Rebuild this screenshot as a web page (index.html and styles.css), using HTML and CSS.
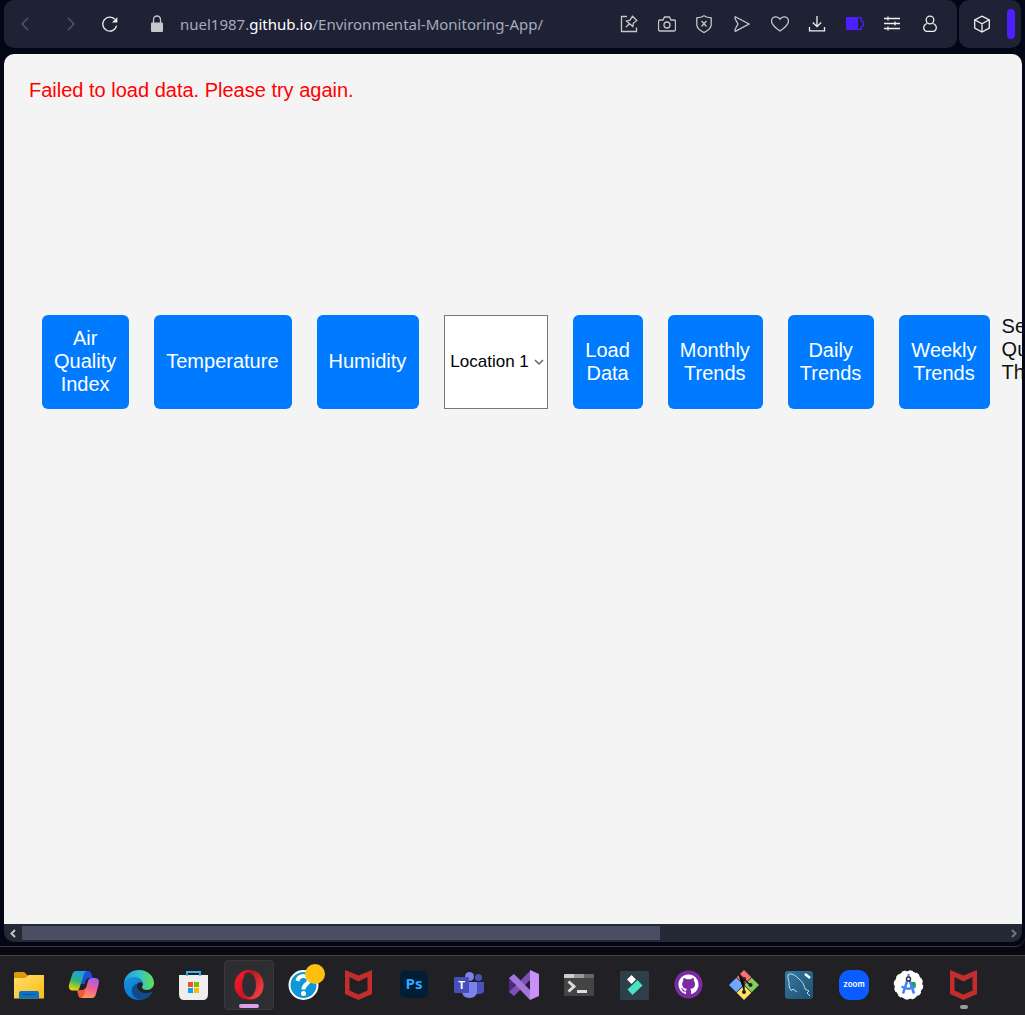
FILE: index.html
```html
<!DOCTYPE html>
<html lang="en">
<head>
<meta charset="utf-8">
<meta name="viewport" content="width=device-width, initial-scale=1">
<title>Environmental Monitoring App</title>
<link rel="stylesheet" href="styles.css">
</head>
<body>
<div class="window">
  <header class="chrome">
    <div class="address-bar">
      <div class="history">
        <button class="tool dim" aria-label="Back"><svg viewBox="0 0 18 18"><path d="M12 3 6 9l6 6"/></svg></button>
        <button class="tool dim" aria-label="Forward"><svg viewBox="0 0 18 18"><path d="m6 3 6 6-6 6"/></svg></button>
      </div>
      <button class="tool bright" aria-label="Reload"><svg viewBox="0 0 18 18"><path d="M15.600 10.600A7 7 0 1 1 13.800 4.200"/><path class="solid" d="M16.400 2v5.400H11z"/></svg></button>
      <div class="location">
        <button class="tool" aria-label="Site information"><svg viewBox="0 0 18 18"><path d="M5.500 8V4.500a3.500 3.500 0 0 1 7 0V8"/><rect class="solid" x="3" y="7.500" width="12" height="9.500" rx="1"/></svg></button>
        <a class="url" href="#">nuel1987.<b>github.io</b>/Environmental-Monitoring-App/</a>
      </div>
      <div class="tools">
        <button class="tool" aria-label="Edit page"><svg viewBox="0 0 18 18"><path d="M7 1.500H1.500v15h15v-4"/><path d="m12.500 1.200 4.300 4.300-3.300 2.500-.7 3.500L6.500 6l3.500-.8zM9.500 8.700 5.800 12.200"/></svg></button>
        <button class="tool" aria-label="Snapshot"><svg viewBox="0 0 18 18"><path d="M2 5h3l1.500-3h5L13 5h3q1.500 0 1.500 1.500v8q0 1.500-1.500 1.500H2q-1.500 0-1.500-1.500v-8Q.5 5 2 5z"/><circle cx="9" cy="10" r="3"/></svg></button>
        <button class="tool" aria-label="Tracker blocker"><svg viewBox="0 0 18 18"><path d="M9 .8q3 2 7.200 2v6.700q0 4.500-7.200 8-7.200-3.500-7.200-8V2.800Q6 2.800 9 .8z"/><path d="m6.500 6 5 5.500m0-5.500-5 5.500"/></svg></button>
        <button class="tool" aria-label="Send"><svg viewBox="0 0 18 18"><path d="M2.300 1.700 16 9 2.300 16.300Q1.500 15 2.500 13.500L5 9 2.500 4.500Q1.500 3 2.300 1.700z"/></svg></button>
        <button class="tool" aria-label="Add to favourites"><svg viewBox="0 0 18 18"><path d="M9 16C6 14 .5 10.500.5 6.100.5 1.500 6.500.2 9 4.200c2.500-4 8.500-2.700 8.500 1.900C17.500 10.500 12 14 9 16z"/></svg></button>
        <button class="tool bright" aria-label="Downloads"><svg viewBox="0 0 18 18"><path d="M9 1v10.500M4.800 7.500 9 11.700l4.200-4.200M1.500 12v3.800h15V12"/></svg></button>
        <button class="tool violet" aria-label="Battery saver"><svg viewBox="0 0 18 18"><rect class="solid" x="0" y="2" width="12" height="13" rx="1"/><path d="M12 2.700h3v2.600l2.200 1.500v4L15 12.200v2.100h-3"/></svg></button>
        <button class="tool bright" aria-label="Easy setup"><svg viewBox="0 0 18 18"><path d="M1 3.500h16M1 8.500h16M1 13.500h16M5 1.500v4M12 6.500v4M5 11.500v4"/></svg></button>
        <button class="tool bright" aria-label="Profile"><svg viewBox="0 0 18 18"><circle cx="9" cy="5" r="3.800"/><path d="M5.800 8.500c-3 1.500-3.500 4-2.700 6q.7 1.800 2.700 1.800h6.400q2 0 2.700-1.800c.8-2 .3-4.500-2.700-6"/></svg></button>
      </div>
    </div>
    <div class="side-bar">
      <button class="tool bright" aria-label="Extensions"><svg viewBox="0 0 18 18"><path d="m9 1.200 7.300 3.600v8.400L9 17l-7.300-3.800V4.800zM1.700 4.800 9 8.700l7.300-3.900M9 8.700V17"/></svg></button>
      <span class="accent"></span>
    </div>
  </header>

  <main class="page">
    <p class="error" role="alert">Failed to load data. Please try again.</p>
    <div class="controls">
      <button class="action">Air Quality Index</button>
      <button class="action">Temperature</button>
      <button class="action">Humidity</button>
      <div class="picker">
        <select aria-label="Location"><option>Location 1</option><option>Location 2</option></select>
        <svg class="caret" viewBox="0 0 10 10" aria-hidden="true"><path d="m1 3 4 4 4-4"/></svg>
      </div>
      <button class="action">Load Data</button>
      <button class="action">Monthly Trends</button>
      <button class="action">Daily Trends</button>
      <button class="action">Weekly Trends</button>
      <span class="threshold">Set Air<br>Quality<br>Threshold</span>
    </div>
  </main>

  <div class="scroll">
    <svg class="arrow" viewBox="0 0 18 18"><path d="M11 6 7.500 9.500 11 13"/></svg>
    <div class="track"><div class="thumb"></div></div>
    <svg class="arrow off" viewBox="0 0 18 18"><path d="m8 6 3.500 3.500L8 13"/></svg>
  </div>
</div>

<nav class="taskbar" aria-label="Taskbar">
  <button class="app" aria-label="File Explorer"><svg viewBox="0 0 32 32">
    <defs><linearGradient id="folder" x2="1" y2="1"><stop stop-color="#ffdf6e"/><stop offset="1" stop-color="#fbbb13"/></linearGradient></defs>
    <path fill="#dc9a06" d="M1 4.500Q1 3 2.500 3H10q1.500 0 2.500 1.200L15 7v3H1z"/><path fill="url(#folder)" d="M1 9h10q1.500 0 2.500-1.300Q14.500 6 16 6h15v23.500H1z"/><path fill="#0a74c4" d="M6 29.500V24q0-2 2-2h16q2 0 2 2v5.500z"/><path stroke="#07518e" d="M9.500 25.500h13"/></svg></button>
  <button class="app" aria-label="Copilot"><svg viewBox="0 0 32 32">
    <defs><linearGradient id="cop1" x1=".6" y1="0" x2=".3" y2="1"><stop stop-color="#1c9cf0"/><stop offset=".5" stop-color="#2db27a"/><stop offset="1" stop-color="#f2d600"/></linearGradient><linearGradient id="cop2" x1=".6" y1="0" x2=".3" y2="1"><stop stop-color="#a35bf2"/><stop offset=".5" stop-color="#f3608f"/><stop offset="1" stop-color="#ff9a5a"/></linearGradient></defs>
    <path fill="#1b50d8" d="M7 2h13q2.500 0 3.500 3l1 4h-3q-3 0-4 3l-1 3h-5z"/><path fill="#f2583c" d="M9 21h6l4-3v9q-.7 2-3 2h-3q-2 0-2.600-2z"/><path fill="url(#cop1)" d="M8 2h11q-2 0-3 3l-4.500 14q-.8 2.500-3 2.500H5q-5 0-4-6L4 6q1-4 4-4z"/><path fill="url(#cop2)" d="M24 29H13q2 0 3-3l4-14q1-3 4-3h3q5 0 3.700 6L28 25q-1 4-4 4z"/></svg></button>
  <button class="app" aria-label="Edge"><svg viewBox="0 0 32 32">
    <defs><linearGradient id="edge1" x2="1"><stop stop-color="#1c9de2"/><stop offset=".5" stop-color="#35c1c9"/><stop offset="1" stop-color="#5ee04e"/></linearGradient><linearGradient id="edge2" y2="1"><stop stop-color="#1693df"/><stop offset="1" stop-color="#0869c5"/></linearGradient></defs>
    <path fill="url(#edge1)" d="M1 15C1 7 7.500 1 16 1s15 6 15 13c0 4-3 7-7 7-3 0-5-1-5-3 0-1 1-1.500 1-3 0-2-2-4-5-4z"/><path fill="url(#edge2)" d="M1 16c0-5 5-8 10-8 5 0 9 3 9 7-2-3-6-2-6 2 0 6 5 9 9 9 2 0 4-1 5.500-2C26 28 21 31 16 31 8 31 1 25 1 16z"/><path fill="#114a8b" d="M14 14.500c-5 2-6.500 7-4 11 2 4 6 5.500 8 5.300 5-.5 9-3.500 11-7 .4-1-.4-1.200-1-.8-7 3-14-1-14-6z"/></svg></button>
  <button class="app" aria-label="Microsoft Store"><svg viewBox="0 0 32 32">
    <path fill="#eee" d="M1 6h29v19q0 6-5 6H6q-5 0-5-6z"/><path fill="none" stroke="#35b8ef" stroke-width="1.800" d="M9 7V3h13v4"/><path fill="#f25022" d="M10 13h5v5h-5z"/><path fill="#7fba00" d="M16 13h5v5h-5z"/><path fill="#00a4ef" d="M10 19h5v5h-5z"/><path fill="#ffb900" d="M16 19h5v5h-5z"/></svg></button>
  <button class="app active" aria-label="Opera"><svg viewBox="0 0 32 32">
    <defs><linearGradient id="op1" y2="1"><stop stop-color="#ff1b2d"/><stop offset="1" stop-color="#b00a18"/></linearGradient><linearGradient id="op2" y2="1"><stop stop-color="#9c0c14"/><stop offset="1" stop-color="#ff4b4b"/></linearGradient></defs>
    <ellipse cx="16" cy="16" rx="14.500" ry="15" fill="url(#op1)"/><path fill="url(#op2)" d="M11 5q4-4 10-3c6 2 9.500 7 9.500 14S27 28 21 30q-6 1-10-3z"/><ellipse cx="16" cy="16" rx="7" ry="12" fill="#2e2d32"/></svg></button>
  <button class="app" aria-label="Get Help"><svg viewBox="0 0 32 32">
    <circle cx="15.500" cy="16" r="14" fill="#0d97d8" stroke="#fff" stroke-width="2"/><path fill="none" stroke="#fff" stroke-width="4" d="M9.500 12q1-5 6-5t5.300 4.500c0 4-5.300 3.500-5.300 9"/><circle cx="15.500" cy="24.500" r="2.500" fill="#fff"/></svg><span class="badge"></span></button>
  <button class="app" aria-label="McAfee"><svg viewBox="0 0 32 32"><path fill="#c32d2d" fill-rule="evenodd" d="M2 1l13.500 5.500L29 1v24l-13.500 6L2 25zM6.500 8v13.500l9 4 9-4V8l-9 4.500z"/></svg></button>
  <button class="app" aria-label="Photoshop"><svg viewBox="0 0 32 32"><rect x="2" y="2" width="28" height="27" rx="5" fill="#001e36"/><text class="glyph ps" x="16" y="20">Ps</text></svg></button>
  <button class="app" aria-label="Teams"><svg viewBox="0 0 32 32">
    <circle cx="25.500" cy="8.500" r="3.500" fill="#4a53bd"/><path fill="#4a53bd" d="M22 13h9v8q0 4-5 4h-4z"/><circle cx="16.500" cy="7.500" r="4.500" fill="#7b83eb"/><path fill="#7b83eb" d="M9 13h15v9q0 7-7.500 7T9 22z"/><rect x="1" y="8" width="15" height="16" rx="1" fill="#464eb8"/><text class="glyph teams" x="8.500" y="20">T</text></svg></button>
  <button class="app" aria-label="Visual Studio"><svg viewBox="0 0 32 32">
    <path fill="#52297d" d="M1 9l5-4v22l-5-4z"/><path fill="#7b4fb5" d="M22 2v9L6 27l-5-4z"/><path fill="#a574dc" d="M1 9l5-4 16 16v10z"/><path fill="#cb90f8" d="M22 1l9 4v22l-9 4z"/></svg></button>
  <button class="app" aria-label="Terminal"><svg viewBox="0 0 32 32">
    <rect x="1" y="5" width="30" height="22" rx="1" fill="#444"/><path fill="#ccc" d="M1 9V6q0-1 1-1h9v4z"/><path fill="#999" d="M11 5h10v4H11z"/><path fill="#666" d="M21 5h9q1 0 1 1v3H21z"/><path fill="none" stroke="#ddd" stroke-width="3" d="m5.500 12.500 5.500 5-5.500 5"/><path fill="#ddd" d="M14 21h10v3H14z"/></svg></button>
  <button class="app" aria-label="Filmora"><svg viewBox="0 0 32 32"><rect x="2" y="2" width="29" height="29" rx="1" fill="#2f3f49"/><path fill="#fff" d="m13.500 6 4.500 4.500-4.500 4.500L9 10.500z"/><path fill="#49e2c2" d="m19.500 11 5 5.500-10 9.500-5-5.500z"/></svg></button>
  <button class="app" aria-label="GitHub Desktop"><svg viewBox="0 0 32 32"><circle cx="15.500" cy="15.500" r="14" fill="#7b2ba3"/><path fill="#fff" d="M15.500 5.500C9.700 5.500 5.500 10 5.500 15.500c0 4.500 2.800 8 6.800 9.500.6 0 .7-.3.7-.7V22.500c-3 .6-3.500-1-4-2-.3-.6-1-1.200-1.300-1.500 1.500-.2 2.300 1 3 2 .7.800 1.500.8 2.500.5.100-.8.400-1.200.8-1.500-2.500-.3-4.800-1.500-4.800-5 0-1.300.4-2.200 1.200-3-.2-.8-.3-2 .2-3 1 0 2 .7 3 1.300h4c1-.6 2-1.300 3-1.300.5 1 .4 2.200.2 3 .8.800 1.200 1.700 1.200 3 0 3.500-2.300 4.700-4.800 5 .6.600.9 1.300.9 2.500v2c0 .4.300.7.800.5 4-1.500 6.600-5 6.600-9.500 0-5.500-4.200-10-10-10z"/></svg></button>
  <button class="app" aria-label="Git"><svg viewBox="0 0 32 32"><path fill="#f87171" d="m16 1 7.300 7.300L16 15.500 8.700 8.300z"/><path fill="#6fa8fc" d="m8.300 8.700 7.300 7.300-7.300 7.300L1 16z"/><path fill="#84cf59" d="m23.700 8.700L31 16l-7.300 7.300-7.300-7.300z"/><path fill="#ffe066" d="m16 16.400 7.300 7.300L16 31l-7.300-7.300z"/><path stroke="#231f20" stroke-width="1.500" d="m10 4 6 6v13M16 10l6 6"/><g fill="#231f20"><circle cx="16" cy="10" r="2"/><circle cx="22.500" cy="16" r="2"/><circle cx="16" cy="23" r="2"/></g></svg></button>
  <button class="app" aria-label="MySQL Workbench"><svg viewBox="0 0 32 32"><defs><linearGradient id="sql" y2="1"><stop stop-color="#3479a3"/><stop offset="1" stop-color="#20516f"/></linearGradient></defs><rect x="2" y="2" width="28" height="28" rx="3" fill="url(#sql)"/><path fill="none" stroke="#bfe0ef" d="M10 20Q8 24 6 17c1-4-2-8-1-11 3-3 8 1 11 4 4 3 5 6 6 10l4 2-2 2 3 3M10 20l4 3"/><path stroke="#fff" stroke-width="2.500" d="m22 5 5 4"/></svg></button>
  <button class="app" aria-label="Zoom"><svg viewBox="0 0 32 32"><rect x="1" y="1" width="30" height="30" rx="11" fill="#0b5cff"/><text class="glyph zoom" x="16" y="18">zoom</text></svg></button>
  <button class="app" aria-label="Android Studio"><svg viewBox="0 0 32 32"><circle cx="15.500" cy="16" r="14" fill="#fff"/><circle cx="15.500" cy="16" r="14" fill="none" stroke="#fff" stroke-width="1.500" stroke-dasharray="4 3.330"/><path fill="#20a34a" d="M17 13h5q2 3 0 5h-5z"/><path fill="none" stroke="#4285f4" stroke-width="2.500" d="M15.500 8 10 24.500M15.500 8 21 24.500M8.500 17.500q7 4.500 14 0"/><path stroke="#4285f4" stroke-width="2" d="M15.500 5v5"/><circle cx="15.500" cy="10" r="2" fill="#fff" stroke="#333" stroke-width="1.500"/></svg></button>
  <button class="app running" aria-label="McAfee Security"><svg viewBox="0 0 32 32"><path fill="#c32d2d" fill-rule="evenodd" d="M2 1l13.500 5.500L29 1v24l-13.500 6L2 25zM6.500 8v13.500l9 4 9-4V8l-9 4.500z"/></svg></button>
</nav>
</body>
</html>
```
FILE: styles.css
```css
* {
  box-sizing: border-box;
}

body {
  margin: 0;
  min-height: 100vh;
  display: flex;
  flex-direction: column;
  background: #08060f;
  font-family: "Liberation Sans", Arial, sans-serif;
  overflow-x: hidden;
}

button {
  border: 0;
  margin: 0;
  padding: 0;
  background: none;
  font: inherit;
  cursor: pointer;
}

/* Browser window */
.window {
  flex: 1;
  display: flex;
  flex-direction: column;
  min-width: 0;
  margin-bottom: 8px;
  padding: 0 3px 4px 4px;
  background: #030615;
  border-bottom: 1px solid #39383f;
  border-bottom-right-radius: 10px;
}

.chrome {
  display: flex;
  gap: 2px;
  height: 48px;
  margin: 0 1px 6px 0;
}

.address-bar,
.side-bar {
  display: flex;
  align-items: center;
  background: #1e2234;
  border-radius: 10px;
}

.address-bar {
  flex: 1;
  gap: 21px;
  padding: 0 18px 0 12px;
}

.history {
  display: flex;
  gap: 28px;
}

.location {
  flex: 1;
  display: flex;
  align-items: center;
  gap: 14px;
  margin-left: 8px;
}

.side-bar {
  justify-content: space-between;
  width: 62px;
  padding: 0 6px 0 14px;
}

.accent {
  width: 8px;
  height: 30px;
  border-radius: 4px;
  background: #4b1fff;
}

.tools {
  display: flex;
  justify-content: space-between;
  width: 319px;
}

.tool {
  width: 18px;
  height: 18px;
  color: #c6c8cc;
}

.tool svg {
  display: block;
  fill: none;
  stroke: currentColor;
  stroke-width: 1.3;
}

.tool .solid {
  fill: currentColor;
  stroke: none;
}

.dim {
  color: #575a68;
}

.bright {
  color: #f0f0f2;
}

.violet {
  color: #4b1fff;
}

.url {
  color: #a3adbd;
  font-family: "Noto Sans", "Open Sans", sans-serif;
  font-size: 15px;
  line-height: 24px;
  text-decoration: none;
  white-space: nowrap;
}

.url b {
  color: #fff;
  font-weight: 400;
}

/* Page */
.page {
  flex: 1;
  padding: 25px;
  overflow: hidden;
  background: #f4f4f4;
  border-radius: 10px 10px 0 0;
  font-size: 20px;
  line-height: 23px;
}

.error {
  margin: 0 0 213px;
  color: #f00;
}

.controls {
  display: flex;
  gap: 25px;
  padding-left: 13px;
}

.action {
  flex: none;
  width: min-content;
  padding: 12px 13px 13px 12px;
  border-radius: 6px;
  background: #007bff;
  color: #fff;
}

.picker {
  flex: none;
  position: relative;
  display: flex;
  width: 104px;
}

.picker select {
  width: 100%;
  margin: 0;
  padding: 0 5px 2px;
  appearance: none;
  border: 1px solid #767676;
  border-radius: 0;
  background: #fff;
  color: #000;
  font: 17px "Liberation Sans", Arial, sans-serif;
}

.caret {
  position: absolute;
  top: 42px;
  right: 4px;
  width: 10px;
  height: 10px;
  fill: none;
  stroke: #666;
  stroke-width: 1.5;
  pointer-events: none;
}

.threshold {
  flex: none;
  margin-left: -13px;
  color: #111;
}

/* Horizontal scrollbar */
.scroll {
  display: flex;
  height: 18px;
  background: #252935;
  border-radius: 0 0 10px 10px;
}

.arrow {
  width: 18px;
  height: 18px;
  fill: none;
  stroke: #c4c4c6;
  stroke-width: 2;
}

.off {
  stroke: #74767c;
}

.track {
  flex: 1;
  padding: 2px 0;
}

.thumb {
  width: 65%;
  height: 14px;
  background: #4a4e64;
}

/* Taskbar */
.taskbar {
  display: flex;
  gap: 5px;
  padding: 4px 4px 5px;
  overflow: hidden;
  border-top: 1px solid #454449;
  background: #212025;
}

.app {
  flex: none;
  position: relative;
  display: grid;
  place-items: center;
  width: 50px;
  height: 50px;
  border-radius: 4px;
}

.app svg {
  width: 32px;
  height: 32px;
}

.active {
  background: #2e2d32;
  border: 1px solid #3a393e;
}

.active::after,
.running::after {
  content: "";
  position: absolute;
  bottom: 1px;
  width: 20px;
  height: 4px;
  border-radius: 2px;
  background: #dca0e4;
}

.running::after {
  width: 8px;
  background: #9a9a9c;
}

.badge {
  position: absolute;
  top: 4px;
  right: 4px;
  width: 20px;
  height: 20px;
  border-radius: 50%;
  background: #ffbf0d;
}

.glyph {
  fill: #fff;
  font-weight: 700;
  text-anchor: middle;
}

.ps {
  fill: #31a8ff;
  font-family: "Noto Sans", sans-serif;
  font-size: 15px;
}

.teams {
  font-size: 11px;
}

.zoom {
  font-family: Inter, sans-serif;
  font-size: 8px;
  font-weight: 600;
}
```
